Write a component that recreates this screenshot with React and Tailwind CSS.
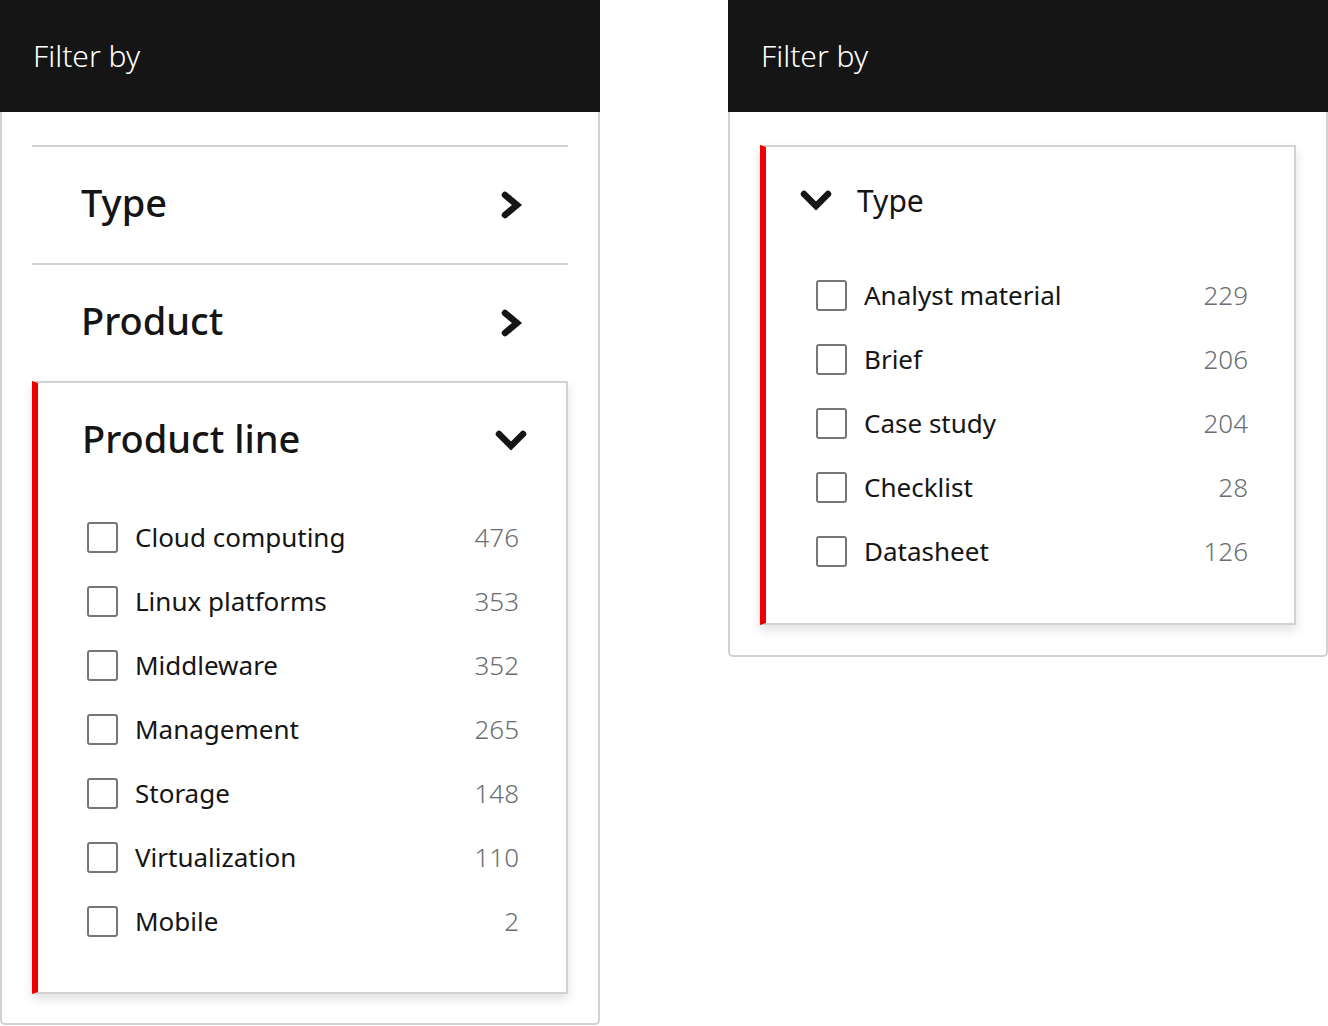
import React from 'react';

const font = { fontFamily: '"Noto Sans", "Liberation Sans", sans-serif' };

const productLines = [
  { label: 'Cloud computing', count: 476 },
  { label: 'Linux platforms', count: 353 },
  { label: 'Middleware', count: 352 },
  { label: 'Management', count: 265 },
  { label: 'Storage', count: 148 },
  { label: 'Virtualization', count: 110 },
  { label: 'Mobile', count: 2 },
];

const types = [
  { label: 'Analyst material', count: 229 },
  { label: 'Brief', count: 206 },
  { label: 'Case study', count: 204 },
  { label: 'Checklist', count: 28 },
  { label: 'Datasheet', count: 126 },
];

const ChevronRight = () => (
  <svg width="24" height="30" viewBox="0 0 24 30" fill="none">
    <polyline points="5,5 17,15 5,25" stroke="#151515" strokeWidth="6.5" strokeLinecap="round" strokeLinejoin="miter" />
  </svg>
);

const ChevronDown = () => (
  <svg width="32" height="24" viewBox="0 0 32 24" fill="none">
    <polyline points="4,5 16,17 28,5" stroke="#151515" strokeWidth="6.5" strokeLinecap="round" strokeLinejoin="miter" />
  </svg>
);

const Header = () => (
  <div className="h-[112px] bg-[#151515] pl-[33px] flex items-center text-white text-[30px] font-light pb-[2px]">
    Filter by
  </div>
);

const Checkbox = () => (
  <span className="w-[31px] h-[31px] shrink-0 rounded-[3px] border-2 border-[#777777] bg-white" />
);

const Option = ({ label, count }) => (
  <label className="h-[64px] flex items-center">
    <Checkbox />
    <span className="ml-[17px] flex-1 text-[26px] text-[#151515]">{label}</span>
    <span className="text-[26px] text-[#6a6e73] font-light">{count}</span>
  </label>
);

const Collapsed = ({ title }) => (
  <div className="h-[118px] border-t-2 border-[#d2d2d2] flex items-center justify-between pl-[49px] pr-[40px]">
    <span className="text-[38px] font-medium text-[#151515] pb-[5px]">{title}</span>
    <span className="w-[32px] flex justify-center">
      <ChevronRight />
    </span>
  </div>
);

const App = () => {
  return (
    <div className="flex items-start gap-[128px] bg-white min-h-[1026px]" style={font}>
      {/* left: accordion with headings on the left */}
      <div className="w-[600px]">
        <Header />
        <div className="border-2 border-t-0 border-[#d2d2d2] rounded-b-[5px] px-[30px] pt-[33px] pb-[29px]">
          <Collapsed title="Type" />
          <Collapsed title="Product" />
          <div className="border-2 border-l-[6px] border-[#d2d2d2] border-l-[#ee0000] shadow-[0_5px_10px_rgba(0,0,0,0.12)] pl-[44px] pr-[39px] pb-[39px]">
            <div className="h-[116px] flex items-center justify-between">
              <span className="text-[38px] font-medium text-[#151515] pb-[5px]">Product line</span>
              <span className="w-[32px] flex justify-center">
                <ChevronDown />
              </span>
            </div>
            <div className="pt-[6px] pl-[5px] pr-[8px]">
              {productLines.map((item) => (
                <Option key={item.label} {...item} />
              ))}
            </div>
          </div>
        </div>
      </div>

      {/* right: single open section, chevron first */}
      <div className="w-[600px]">
        <Header />
        <div className="border-2 border-t-0 border-[#d2d2d2] rounded-b-[5px] px-[30px] pt-[33px] pb-[30px]">
          <div className="border-2 border-l-[6px] border-[#d2d2d2] border-l-[#ee0000] shadow-[0_5px_10px_rgba(0,0,0,0.12)] pl-[34px] pr-[46px] pb-[40px]">
            <div className="h-[108px] flex items-center">
              <span className="w-[32px] flex justify-center">
                <ChevronDown />
              </span>
              <span className="ml-[25px] text-[30px] text-[#151515] pb-[2px]">Type</span>
            </div>
            <div className="pt-[8px] pl-[16px]">
              {types.map((item) => (
                <Option key={item.label} {...item} />
              ))}
            </div>
          </div>
        </div>
      </div>
    </div>
  );
};

export default App;
